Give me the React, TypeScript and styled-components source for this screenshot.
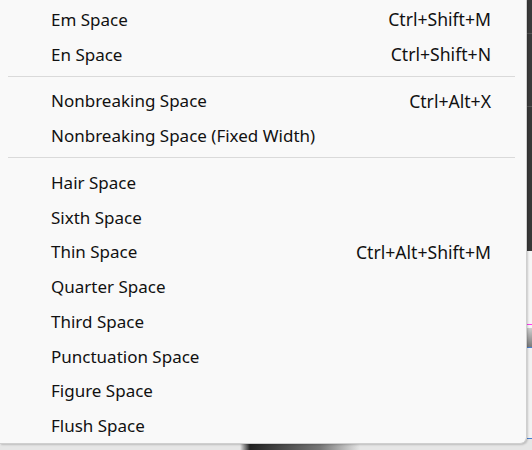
import React from "react"
import styled, { createGlobalStyle } from "styled-components"

const GlobalStyle = createGlobalStyle`
  html, body {
    margin: 0;
    padding: 0;
    width: 532px;
    height: 450px;
    overflow: hidden;
    background: #e4e4e4;
  }
`

type Entry = { label: string; shortcut?: string } | "sep"

const entries: Entry[] = [
  { label: "Em Space", shortcut: "Ctrl+Shift+M" },
  { label: "En Space", shortcut: "Ctrl+Shift+N" },
  "sep",
  { label: "Nonbreaking Space", shortcut: "Ctrl+Alt+X" },
  { label: "Nonbreaking Space (Fixed Width)" },
  "sep",
  { label: "Hair Space" },
  { label: "Sixth Space" },
  { label: "Thin Space", shortcut: "Ctrl+Alt+Shift+M" },
  { label: "Quarter Space" },
  { label: "Third Space" },
  { label: "Punctuation Space" },
  { label: "Figure Space" },
  { label: "Flush Space" },
]

const Desktop = styled.div`
  display: grid;
  grid-template-columns: 527px 1fr;
  grid-template-rows: 444px 1fr;
  width: 532px;
  height: 450px;
`

const Menu = styled.div`
  grid-column: 1;
  grid-row: 1;
  display: flex;
  flex-direction: column;
  padding-top: 2px;
  background: #f9f9f9;
  border-right: 1px solid #cfcfcf;
  border-bottom: 1px solid #cfcfcf;
  border-bottom-right-radius: 7px;
  box-shadow: 1px 1px 2px rgba(0, 0, 0, 0.18);
  font-family: "Noto Sans", "Open Sans", sans-serif;
  font-size: 17px;
  color: #111;
  position: relative;
  z-index: 1;
`

const Item = styled.div`
  display: flex;
  align-items: center;
  justify-content: space-between;
  height: 35px;
  padding: 0 35px 0 51px;
  white-space: nowrap;
`

const Shortcut = styled.span`
  font-size: 17.6px;
`

const Separator = styled.div`
  height: 1px;
  margin: 4px 11px 7px 8px;
  background: #dadada;
`

const SideStrip = styled.div`
  grid-column: 2;
  grid-row: 1 / span 2;
  display: flex;
  flex-direction: column;
`

type BandProps = { $h: number; $bg: string }

const Band = styled.div<BandProps>`
  height: ${(p) => p.$h}px;
  flex-shrink: 0;
  background: ${(p) => p.$bg};
`

const BottomStrip = styled.div`
  grid-column: 1;
  grid-row: 2;
  background: linear-gradient(
    to right,
    #e6e6e6 0,
    #e6e6e6 240px,
    #222 250px,
    #777 320px,
    #e6e6e6 360px,
    #e6e6e6 100%
  );
`

export default function App() {
  return (
    <>
      <GlobalStyle />
      <Desktop>
        <Menu>
          {entries.map((e, i) =>
            e === "sep" ? (
              <Separator key={i} />
            ) : (
              <Item key={i}>
                <span>{e.label}</span>
                {e.shortcut && <Shortcut>{e.shortcut}</Shortcut>}
              </Item>
            )
          )}
        </Menu>
        <SideStrip>
          <Band $h={33} $bg="#3a3a3a" />
          <Band $h={1} $bg="#555" />
          <Band $h={72} $bg="#3a3a3a" />
          <Band $h={1} $bg="#555" />
          <Band $h={144} $bg="#383838" />
          <Band $h={73} $bg="#f6f6f6" />
          <Band $h={1} $bg="#ff3df0" />
          <Band $h={3} $bg="#f6f6f6" />
          <Band $h={19} $bg="linear-gradient(#cfcfcf, #7a7a7a)" />
          <Band $h={1} $bg="#4a7fd0" />
          <Band $h={90} $bg="#f2f2f2" />
          <Band $h={1} $bg="#4a7fd0" />
          <Band $h={11} $bg="#e6e6e6" />
        </SideStrip>
        <BottomStrip />
      </Desktop>
    </>
  )
}
